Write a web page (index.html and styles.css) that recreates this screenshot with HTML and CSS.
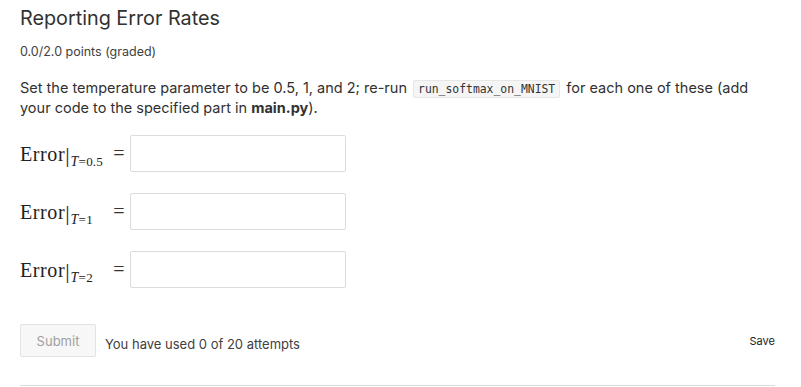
FILE: index.html
```html
<!DOCTYPE html>
<html>
<head>
<meta charset="utf-8">
<link rel="stylesheet" href="styles.css">
</head>
<body>
<div class="problem">
  <h3 class="title">Reporting Error Rates</h3>
  <div class="points">0.0/2.0 points (graded)</div>
  <p class="text">Set the temperature parameter to be 0.5, 1, and 2; re-run <code class="code">run_softmax_on_MNIST</code> for each one of these (add your code to the specified part in <strong>main.py</strong>).</p>

  <div class="rows">
    <div class="row">
      <span class="math"><span class="word">Error</span><span class="bar">|</span><sub class="sub"><i>T</i>=0.5</sub></span>
      <span class="eq">=</span>
      <span class="input"></span>
    </div>
    <div class="row">
      <span class="math"><span class="word">Error</span><span class="bar">|</span><sub class="sub"><i>T</i>=1</sub></span>
      <span class="eq">=</span>
      <span class="input"></span>
    </div>
    <div class="row">
      <span class="math"><span class="word">Error</span><span class="bar">|</span><sub class="sub"><i>T</i>=2</sub></span>
      <span class="eq">=</span>
      <span class="input"></span>
    </div>
  </div>

  <div class="actions">
    <button class="submit">Submit</button>
    <span class="attempts">You have used 0 of 20 attempts</span>
    <span class="save">Save</span>
  </div>
  <div class="rule"></div>
</div>
</body>
</html>
```
FILE: styles.css
```css
html, body {
  margin: 0;
  padding: 0;
  background: #fff;
}
body {
  font-family: Inter, "Open Sans", sans-serif;
  color: #313131;
}
.problem {
  padding: 0 26px 0 20px;
}
.title {
  margin: 0;
  padding-top: 6px;
  font-size: 19.8px;
  font-weight: 400;
  line-height: 24px;
  color: #313131;
}
.points {
  margin-top: 14px;
  font-size: 12.5px;
  line-height: 16px;
  color: #414141;
}
.text {
  margin: 18px 0 0 0;
  font-size: 14.5px;
  line-height: 20px;
  color: #313131;
}
.text strong {
  font-weight: 700;
}
.code {
  font-family: "DejaVu Sans Mono", monospace;
  font-size: 11.4px;
  line-height: 13px;
  background: #f5f5f5;
  border: 1px solid #e7e7e7;
  border-radius: 2px;
  padding: 1px 4px;
  margin: 0 2px;
  color: #333;
}
.rows {
  margin-top: 17px;
  display: flex;
  flex-direction: column;
  gap: 21px;
}
.row {
  display: flex;
  align-items: center;
  height: 37px;
}
.math {
  width: 88px;
  font-family: "Liberation Serif", "DejaVu Serif", serif;
  font-size: 20px;
  color: #222;
  display: inline-flex;
  align-items: baseline;
  white-space: nowrap;
}
.word {
  letter-spacing: 0.6px;
}
.bar {
  font-size: 22px;
  transform: translateY(1px);
}
.sub {
  font-size: 13px;
  vertical-align: baseline;
  position: relative;
  top: 5px;
  margin-left: 1px;
  letter-spacing: 0.2px;
}
.sub i {
  font-size: 14px;
}
.eq {
  width: 22px;
  font-family: "Liberation Serif", serif;
  font-size: 20px;
  color: #333;
  text-align: center;
}
.input {
  width: 214px;
  height: 35px;
  border: 1px solid #dcdcdc;
  border-radius: 2px;
  background: #fff;
  box-sizing: content-box;
}
.actions {
  margin-top: 36px;
  display: flex;
  align-items: center;
  height: 33px;
}
.submit {
  width: 76px;
  height: 33px;
  font-family: Inter, sans-serif;
  font-size: 13px;
  color: #a0a0a0;
  background: #f7f7f7;
  border: 1px solid #e3e3e3;
  border-radius: 2px;
  padding: 0;
  margin: 0;
}
.attempts {
  margin-left: 9px;
  margin-top: 7px;
  font-size: 13px;
  color: #414141;
}
.save {
  margin-left: auto;
  font-size: 11px;
  color: #222;
}
.rule {
  margin-top: 28px;
  height: 1px;
  background: #dddddd;
}
```
